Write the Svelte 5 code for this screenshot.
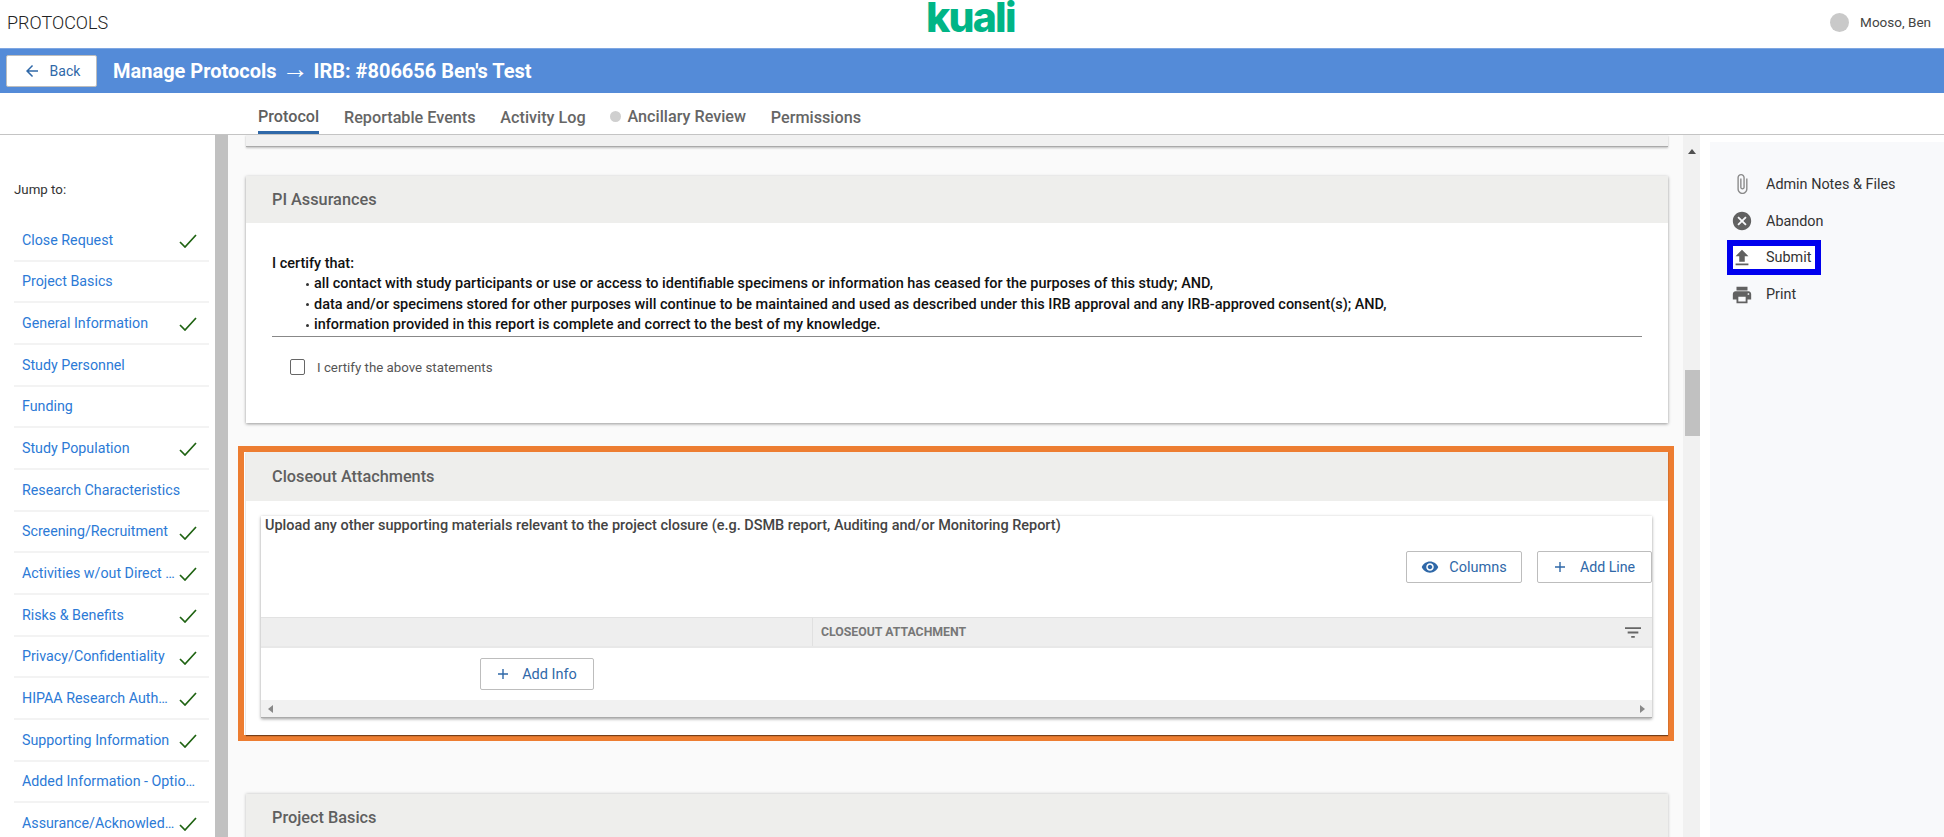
<script>
  const nav = [
    ['Close Request', true], ['Project Basics', false], ['General Information', true],
    ['Study Personnel', false], ['Funding', false], ['Study Population', true],
    ['Research Characteristics', false], ['Screening/Recruitment', true],
    ['Activities w/out Direct Contact', true], ['Risks & Benefits', true],
    ['Privacy/Confidentiality', true], ['HIPAA Research Authorization', true],
    ['Supporting Information', true], ['Added Information - Optional', false],
    ['Assurance/Acknowledgement', true]
  ];
  const bullets = [
    'all contact with study participants or use or access to identifiable specimens or information has ceased for the purposes of this study; AND,',
    'data and/or specimens stored for other purposes will continue to be maintained and used as described under this IRB approval and any IRB-approved consent(s); AND,',
    'information provided in this report is complete and correct to the best of my knowledge.'
  ];
  const tabs = ['Protocol', 'Reportable Events', 'Activity Log', 'Ancillary Review', 'Permissions'];
  const actions = [
    ['Admin Notes & Files', 'M16.5 6v11.5c0 2.21-1.79 4-4 4s-4-1.79-4-4V5c0-1.38 1.12-2.5 2.5-2.5s2.5 1.12 2.5 2.5v10.5c0 .55-.45 1-1 1s-1-.45-1-1V6H10v9.5c0 1.38 1.12 2.5 2.5 2.5s2.5-1.12 2.5-2.5V5c0-2.21-1.79-4-4-4S7 2.79 7 5v12.5c0 3.04 2.46 5.5 5.5 5.5s5.5-2.46 5.5-5.5V6h-1.5z', 'clip'],
    ['Abandon', 'M12 2C6.47 2 2 6.47 2 12s4.47 10 10 10 10-4.47 10-10S17.53 2 12 2zm5 13.59L15.59 17 12 13.41 8.41 17 7 15.59 10.59 12 7 8.41 8.41 7 12 10.59 15.59 7 17 8.41 13.41 12 17 15.59z', ''],
    ['Submit', 'M9 16h6v-6h4l-7-7-7 7h4zm-4 2h14v2H5z', 'boxed'],
    ['Print', 'M19 8H5c-1.66 0-3 1.34-3 3v6h4v4h12v-4h4v-6c0-1.66-1.34-3-3-3zm-3 11H8v-5h8v5zm3-7c-.55 0-1-.45-1-1s.45-1 1-1 1 .45 1 1-.45 1-1 1zm-1-9H6v4h12V3z', '']
  ];
</script>

<div class="page">
  <header class="top">
    <span class="app">PROTOCOLS</span>
    <span class="logo">kuali</span>
    <div class="user"><span class="avatar"></span><span>Mooso, Ben</span></div>
  </header>

  <div class="bar">
    <button class="btn back">
      <svg viewBox="0 0 24 24" width="18" height="18"><path fill="currentColor" d="M20 11H7.83l5.59-5.59L12 4l-8 8 8 8 1.41-1.41L7.83 13H20v-2z"/></svg>
      Back
    </button>
    <h1>Manage Protocols <span class="arrow">→</span> IRB: #806656 Ben's Test</h1>
  </div>

  <nav class="tabs">
    {#each tabs as t, i}
      <span class="tab" class:active={i === 0} class:anc={t === 'Ancillary Review'}>
        {#if t === 'Ancillary Review'}<span class="dot"></span>{/if}{t}
      </span>
    {/each}
  </nav>

  <div class="main">
    <aside class="side">
      <div class="jump">Jump to:</div>
      <ul>
        {#each nav as [label, done]}
          <li class:done>
            <span class="lbl">{label}</span>
            {#if done}
              <svg class="check" viewBox="0 0 18 14" width="18" height="14"><path d="M1 8l5 5L17 1" fill="none" stroke="#1f6312" stroke-width="1.7"/></svg>
            {/if}
          </li>
        {/each}
      </ul>
    </aside>
    <div class="sidescroll"></div>

    <section class="content">
      <div class="sliver"></div>

      <article class="card pi">
        <h2>PI Assurances</h2>
        <div class="pi-body">
          <div class="cert">
            <div>I certify that:</div>
            {#each bullets as b}
              <div class="bullet"><span class="b"></span>{b}</div>
            {/each}
          </div>
          <label class="chk"><span class="box"></span>I certify the above statements</label>
        </div>
      </article>

      <div class="orange">
        <article class="card closeout">
          <h2>Closeout Attachments</h2>
          <div class="cl-body">
            <div class="tbl">
              <p class="upload">Upload any other supporting materials relevant to the project closure (e.g. DSMB report, Auditing and/or Monitoring Report)</p>
              <div class="tools">
                <button class="btn columns">
                  <svg viewBox="0 0 24 24" width="18" height="18"><path fill="currentColor" d="M12 4.5C7 4.5 2.73 7.61 1 12c1.73 4.39 6 7.5 11 7.5s9.27-3.11 11-7.5c-1.73-4.39-6-7.5-11-7.5zM12 17c-2.76 0-5-2.24-5-5s2.24-5 5-5 5 2.24 5 5-2.24 5-5 5zm0-8c-1.66 0-3 1.34-3 3s1.34 3 3 3 3-1.34 3-3-1.34-3-3-3z"/></svg>
                  Columns
                </button>
                <button class="btn addline">
                  <svg viewBox="0 0 12 12" width="12" height="12"><path d="M6 1v10M1 6h10" stroke="currentColor" stroke-width="1.4" fill="none"/></svg>
                  Add Line
                </button>
              </div>
              <div class="thead">
                <div class="th-a"></div>
                <div class="th-b">
                  <span>CLOSEOUT ATTACHMENT</span>
                  <svg viewBox="3 6 18 12" width="16" height="11"><path fill="#666" d="M10 18h4v-2h-4v2zM3 6v2h18V6H3zm3 7h12v-2H6v2z"/></svg>
                </div>
              </div>
              <div class="trow">
                <button class="btn addinfo">
                  <svg viewBox="0 0 12 12" width="12" height="12"><path d="M6 1v10M1 6h10" stroke="currentColor" stroke-width="1.4" fill="none"/></svg>
                  Add Info
                </button>
              </div>
              <div class="hscroll"><span class="al"></span><span class="ar"></span></div>
            </div>
          </div>
        </article>
      </div>

      <article class="card basics"><h2>Project Basics</h2></article>
    </section>

    <div class="vscroll"><span class="up"></span><span class="thumb"></span></div>

    <aside class="actions">
      {#each actions as [label, d, kind]}
        <div class="act {kind}">
          <svg viewBox="0 0 24 24" width="22" height="22"><path fill="currentColor" {d}/></svg>
          <span>{label}</span>
        </div>
      {/each}
    </aside>
  </div>
</div>

<style>
  :global(body) { margin: 0; font-family: Roboto, "Liberation Sans", sans-serif; background: #fff; }
  .page { height: 837px; width: 1944px; overflow: hidden; display: flex; flex-direction: column; color: #333; }

  .top { height: 48px; flex: none; position: relative; display: flex; align-items: center; justify-content: space-between; padding: 0 13px 4px 7px; box-sizing: border-box; }
  .app { font-size: 18px; font-weight: 300; color: #222; }
  .logo { position: absolute; left: 926px; top: 0; font-family: Inter, sans-serif; font-size: 41px; line-height: 34px; font-weight: 800; letter-spacing: -1.8px; color: #00b586; }
  .user { display: flex; align-items: center; gap: 11px; font-size: 13.5px; color: #444; font-weight: 400; }
  .avatar { width: 19px; height: 19px; border-radius: 50%; background: #c9c9c9; }

  .bar { height: 45px; flex: none; background: #548bd8; display: flex; align-items: center; padding-left: 6px; gap: 16px; border-top: 1px solid #7ea6e2; box-sizing: border-box; }
  .bar h1 { margin: 0; font-size: 20px; font-weight: 700; color: #fff; }
  .arrow { font-family: "Liberation Sans", sans-serif; font-weight: 400; font-size: 27px; line-height: 0; }

  .btn { display: inline-flex; align-items: center; background: #fff; border: 1px solid #bdbdbd; border-radius: 2px; color: #2f68a8; font: 400 14.5px Roboto, sans-serif; padding: 0; box-sizing: border-box; justify-content: center; }
  .back { width: 91px; height: 32px; gap: 9px; font-size: 14px; }

  .tabs { height: 42px; flex: none; display: flex; padding-left: 258px; gap: 24.8px; border-bottom: 1px solid #c4c4c4; box-sizing: border-box; align-items: stretch; }
  .tab { font-size: 16.2px; font-weight: 500; color: #666; display: flex; align-items: center; height: 41px; padding-top: 7px; box-sizing: border-box; }
  .tab.active { border-bottom: 3px solid #2f68a8; padding-top: 9px; color: #5f5f5f; }
  .tab.anc { padding-top: 5px; }
  .dot { width: 11px; height: 11px; border-radius: 50%; background: #cfcfcf; margin-right: 6px; }

  .main { flex: 1; display: flex; min-height: 0; }

  .side { width: 215px; flex: none; padding: 0 6px 0 14px; box-sizing: border-box; }
  .jump { font-size: 13.3px; color: #333; margin-top: 47px; line-height: 16px; }
  .side ul { list-style: none; margin: 22px 0 0; padding: 0; }
  .side li { height: 41.67px; box-sizing: border-box; border-bottom: 2px solid #f3f3f3; display: flex; align-items: center; padding: 0 11px 0 8px; position: relative; }
  .side li.done { padding-right: 34px; }
  .lbl { font-size: 14.25px; color: #2c7ad6; white-space: nowrap; overflow: hidden; text-overflow: ellipsis; flex: 1; }
  .check { position: absolute; left: 165px; top: 14px; }
  .sidescroll { width: 13px; flex: none; background: #c1c1c1; }

  .content { width: 1455px; flex: none; background: #fafafa; padding: 0 15px 0 18px; box-sizing: border-box; overflow: hidden; }
  .sliver { height: 11px; background: #f1f1f1; border-bottom: 1px solid #aaa; box-shadow: 0 1px 2px rgba(0,0,0,.25); }

  .card { background: #fff; box-shadow: 0 1px 3px rgba(0,0,0,.4); }
  .card h2 { margin: 0; height: 47px; line-height: 47px; background: #eeeeec; padding-left: 26px; font-size: 16.3px; font-weight: 500; color: #5f5f5f; }
  .pi { margin-top: 29px; height: 247px; }
  .pi-body { padding: 31px 26px 0; }
  .cert { font-size: 14.46px; line-height: 20.3px; color: #111; font-weight: 500; padding-bottom: 1px; border-bottom: 1px solid #888; }
  .bullet { padding-left: 34px; white-space: nowrap; display: flex; align-items: center; }
  .b { width: 3px; height: 3px; border-radius: 50%; background: #333; margin-right: 5px; flex: none; }
  .chk { display: flex; align-items: center; gap: 12px; font-size: 13.3px; color: #555; margin: 22px 0 0 18px; }
  .box { width: 15px; height: 16px; border: 1.5px solid #666; border-radius: 2px; box-sizing: border-box; }

  .orange { margin: 23px -6px 0 -8px; border: 6px solid #ed7d31; background: #fff; padding-left: 2px; }
  .closeout { box-shadow: 0 1px 1px rgba(0,0,0,.5); height: 283px; }
  .closeout h2 { height: 49px; line-height: 49px; }
  .cl-body { padding: 15px 16px 0 15px; }
  .tbl { box-shadow: 0 1px 3px rgba(0,0,0,.4); height: 202px; display: flex; flex-direction: column; }
  .upload { margin: 0; padding: 1px 0 0 4px; height: 35px; box-sizing: border-box; font-size: 14.46px; line-height: 18px; font-weight: 500; color: #444; }
  .tools { display: flex; justify-content: flex-end; gap: 15px; height: 66px; }
  .columns { width: 116px; height: 32px; gap: 10px; }
  .addline { width: 115px; height: 32px; gap: 14px; font-size: 14.2px; }
  .thead { height: 31px; flex: none; display: flex; background: #eee; border-top: 1px solid #e2e2e2; border-bottom: 2px solid #e8e8e8; box-sizing: border-box; }
  .th-a { width: 551px; border-right: 1px solid #e0e0e0; flex: none; }
  .th-b { flex: 1; display: flex; align-items: center; justify-content: space-between; padding: 0 11px 0 8px; font-size: 12.3px; font-weight: 700; color: #777; }
  .trow { flex: 1; padding: 10px 0 0 219px; }
  .addinfo { width: 114px; height: 32px; gap: 13px; }
  .hscroll { height: 18px; flex: none; background: #f1f1f1; border-bottom: 1px solid #aaa; display: flex; justify-content: space-between; align-items: center; padding: 0 7px; box-sizing: border-box; }
  .al { border: 4px solid transparent; border-left: 0; border-right: 5px solid #888; }
  .ar { border: 4px solid transparent; border-right: 0; border-left: 5px solid #888; }

  .basics { margin-top: 53px; height: 100px; box-shadow: 0 0 3px rgba(0,0,0,.25); }
  .basics h2 { height: 47px; }

  .vscroll { width: 17px; flex: none; background: #f1f1f1; position: relative; }
  .up { position: absolute; left: 5px; top: 14px; border: 4px solid transparent; border-top: 0; border-bottom: 5px solid #505050; }
  .thumb { position: absolute; left: 2px; right: 0; top: 235px; height: 66px; background: #c1c1c1; }

  .actions { width: 234px; flex: none; margin: 7px 0 0 10px; background: #f8f9fb; padding: 24px 0 0 17px; box-sizing: border-box; display: flex; flex-direction: column; }
  .act { height: 36.7px; display: flex; align-items: center; gap: 13px; padding-left: 4px; font-size: 14.4px; color: #333; box-sizing: border-box; width: fit-content; }
  .act svg { color: #616161; flex: none; }
  .act.clip svg { color: #8a8a8a; }
  .act.boxed { border: 6px solid #0000ee; background: #fff; height: 35px; padding: 0 4px 0 0; margin: 1px 0; }
  .act.boxed svg { margin-left: -2px; }
</style>
